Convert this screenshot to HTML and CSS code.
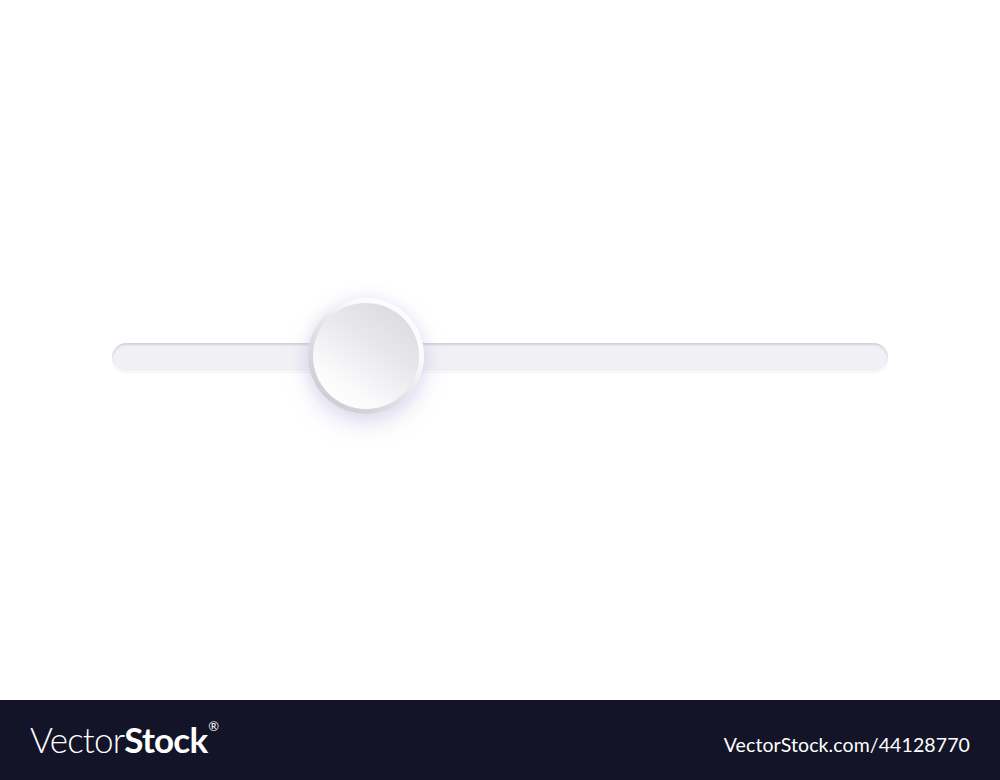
FILE: index.html
```html
<!DOCTYPE html>
<html lang="en">
<head>
	<meta charset="UTF-8">
	<title>Slider</title>
	<link rel="stylesheet" href="styles.css">
</head>
<body>
<div class="stage">
	<div class="track">
		<div class="knob"><div class="knob-face"></div></div>
	</div>
</div>
<div class="footer">
	<div class="logo">Vector<b>Stock</b><sup>&reg;</sup></div>
	<div class="ref">VectorStock.com/44128770</div>
</div>
</body>
</html>
```
FILE: styles.css
```css
*{
	margin: 0;
	padding: 0;
	box-sizing: border-box;
}
body{width:1000px; height:780px; background:#fff; font-family:"Lato", "Open Sans", sans-serif; overflow:hidden;}
.stage{height:700px; padding:343px 0 0 112px;}
.track{position:relative; width:776px; height:29px; border-radius:15px; background:#f1f1f5; box-shadow:inset 0 2px 2px rgba(150,150,170,.35), inset 0 -1px 1px rgba(255,255,255,.9), 0 1px 1px rgba(230,230,240,.6);}
.knob{position:absolute; left:196px; top:-45px; width:116px; height:116px; border-radius:50%; background:linear-gradient(40deg, #c4c4ca 0%, #dedee3 40%, #fafafc 70%, #fff 100%); box-shadow:0 10px 22px rgba(170,170,220,.35), 0 0 14px rgba(200,200,235,.35); padding:5px;}
.knob-face{width:106px; height:106px; border-radius:50%; background:linear-gradient(215deg, #d6d6db 0%, #e8e8ec 40%, #fbfbfc 75%, #fff 100%);}
.footer{height:80px; background:#131427; color:#fff; display:flex; align-items:center; justify-content:space-between; padding:0 30px 0 30px;}
.logo{font-size:35px; font-weight:300; letter-spacing:-0.8px; line-height:1; padding-bottom:2px;}
.logo b{font-weight:700;}
.logo sup{font-size:13px; font-weight:400; vertical-align:top; position:relative; top:-2px; margin-left:1px;}
.ref{font-size:19.5px; font-weight:400; letter-spacing:0.1px; padding-top:8px;}
```
